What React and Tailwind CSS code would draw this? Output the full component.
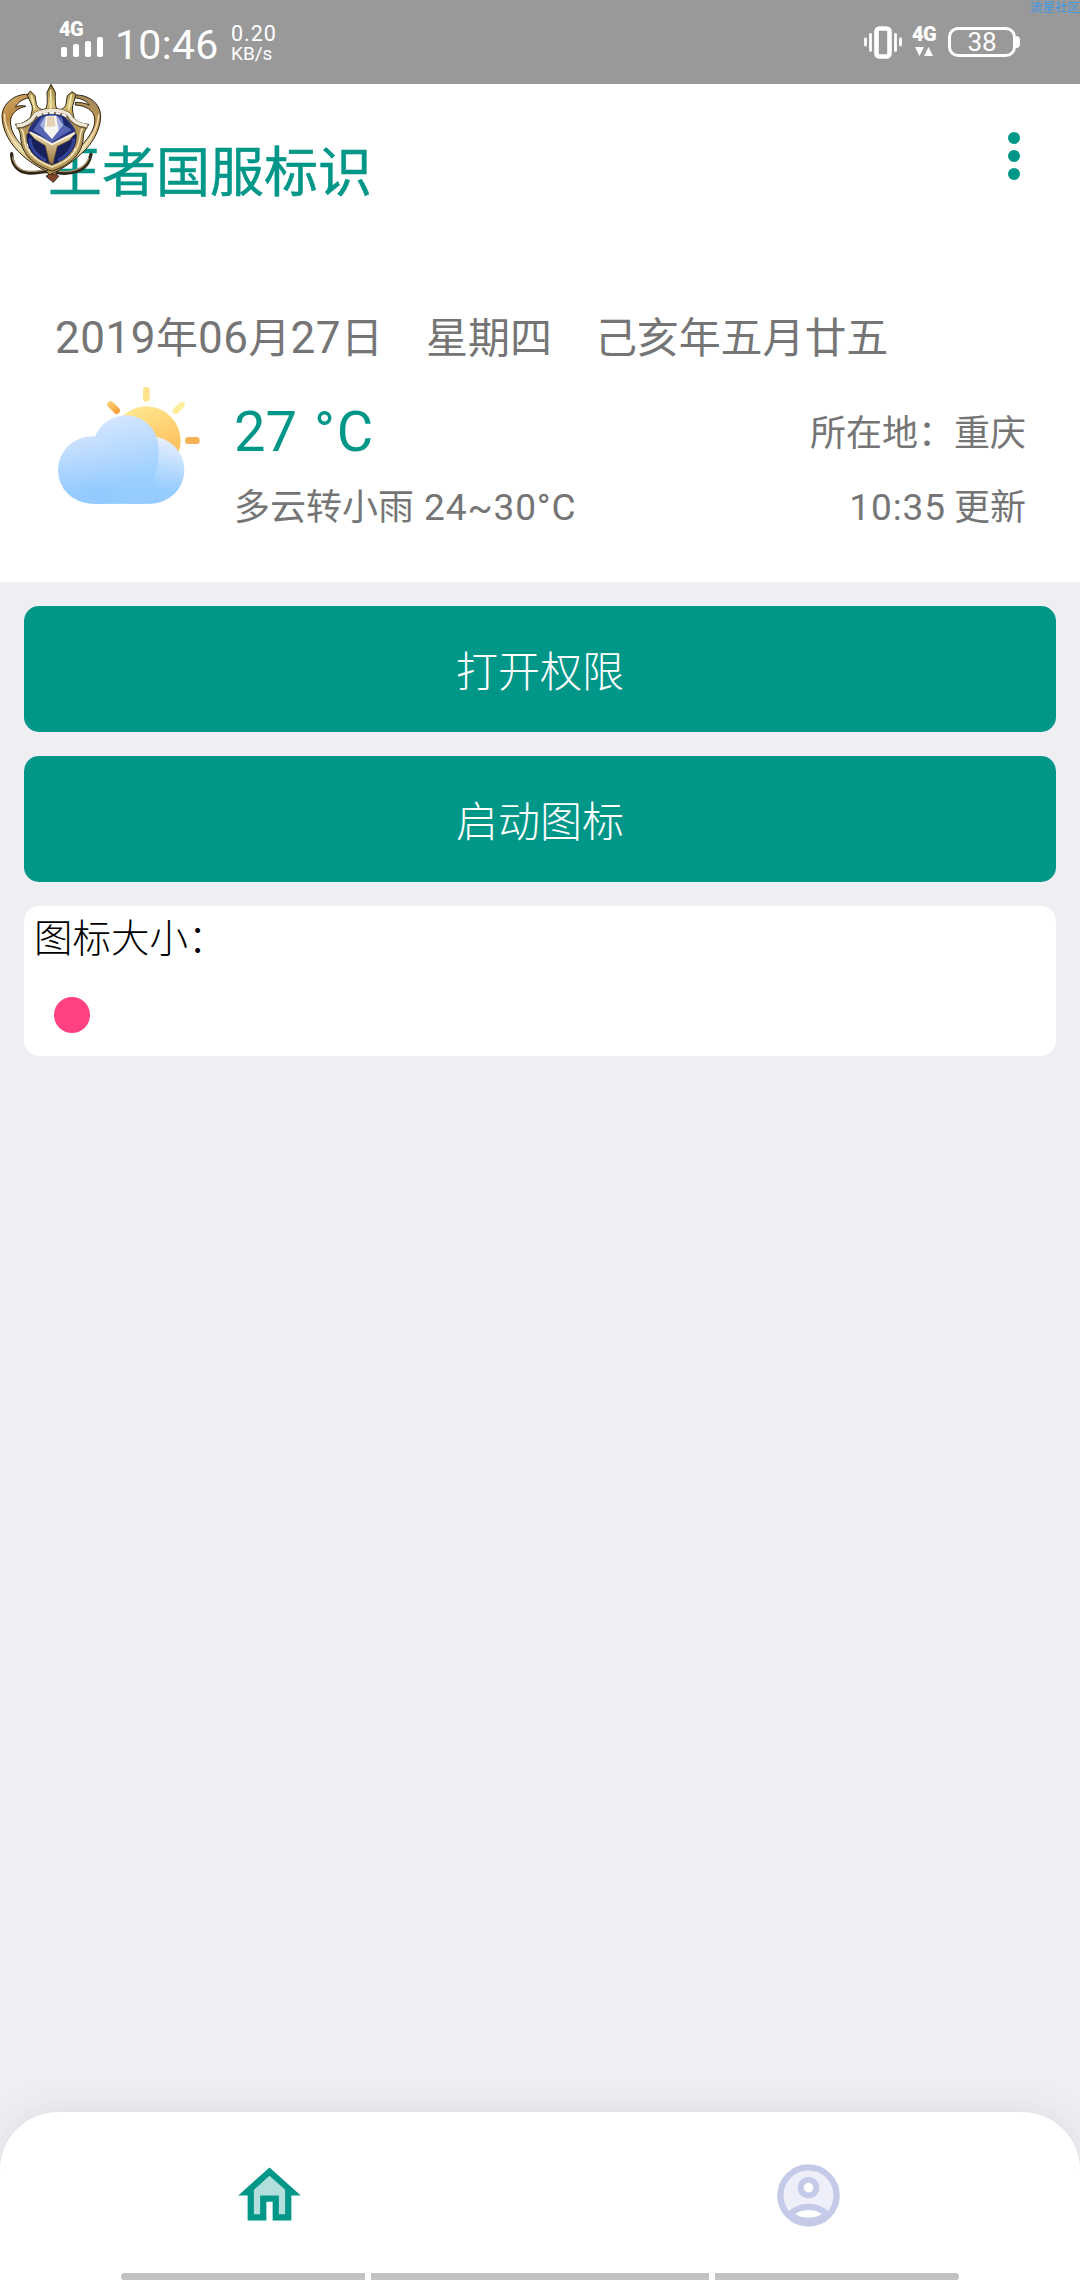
import React from 'react';

const days = { date: ['2019', '年', '06', '月', '27', '日'], week: '星期四', lunar: '己亥年五月廿五' };

const barHeights = ['h-[10px]', 'h-[13px]', 'h-[16px]', 'h-[20px]'];

function StatusBar() {
  return (
    <div className="relative h-[84px] shrink-0 bg-[#999999] text-white font-[Roboto,sans-serif]">
      <div className="flex h-full items-start justify-between pl-[60px] pr-[60px]">
        <div className="flex items-start">
          <div className="w-[46px] pt-[22px]">
            <div className="-ml-px h-[15px] text-[20px] leading-[15px] font-black tracking-[-0.5px]">4G</div>
            <div className="flex h-[20px] items-end gap-[6px] pl-px">
              {barHeights.map((h, i) => (
                <span key={i} className={`w-[6px] rounded-[2px] bg-white ${h}`}></span>
              ))}
            </div>
          </div>
          <div className="w-[112px] pl-[9px] pt-[25px] text-[41px] leading-[41px] tracking-[0.3px] whitespace-nowrap">10:46</div>
          <div className="pl-[13px] pt-[23px]">
            <div className="text-[21.5px] leading-[22px] tracking-[1px]">0.20</div>
            <div className="text-[19px] leading-[18px]">KB/s</div>
          </div>
        </div>

        <div className="flex items-start">
          <svg className="mt-[26px] h-[33px] w-[38px]" viewBox="0 0 38 33" fill="none">
            <rect x="12.5" y="2.5" width="13" height="28" rx="3" stroke="#fff" strokeWidth="4.6" />
            <path d="M1.5 13v6M6.5 8.500v16M31.5 8.500v16M36.500 13v6" stroke="#fff" strokeWidth="2.8" strokeLinecap="round" />
          </svg>
          <div className="ml-[10px] w-[26px] pt-[27px]">
            <div className="h-[16px] text-[20px] leading-[15px] font-black tracking-[-0.5px]">4G</div>
            <svg className="ml-[3px] mt-[4px] h-[9px] w-[18px]" viewBox="0 0 18 9">
              <path d="M0 0h9L4.500 9zM9 9h9L13.500 0z" fill="#fff" />
            </svg>
          </div>
          <div className="ml-[10px] mt-[27px] flex items-center">
            <div className="flex h-[30px] w-[68px] items-center justify-center rounded-[10px] border-[3px] border-white text-[26px] leading-[26px]">38</div>
            <div className="h-[12px] w-[4px] rounded-r-[4px] bg-white"></div>
          </div>
        </div>
      </div>
      <div className="absolute right-0 top-0 whitespace-nowrap text-[12.5px] leading-[13px] text-[#3d98e6] font-['Noto_Sans_CJK_SC',sans-serif]">流星社区</div>
    </div>
  );
}

// Floating crest that sits over the title
function Crest() {
  return (
    <svg className="absolute left-0 top-0 h-[100px] w-[104px]" viewBox="0 27 312 300" fill="none">
      <defs>
        <linearGradient id="hornL" x1="0" y1="60" x2="150" y2="300" gradientUnits="userSpaceOnUse">
          <stop offset="0" stopColor="#d9b878" />
          <stop offset="0.25" stopColor="#b9853f" />
          <stop offset="0.55" stopColor="#e6d3a0" />
          <stop offset="1" stopColor="#c3a15e" />
        </linearGradient>
        <linearGradient id="hornR" x1="310" y1="60" x2="160" y2="300" gradientUnits="userSpaceOnUse">
          <stop offset="0" stopColor="#8d8060" />
          <stop offset="0.3" stopColor="#c79a50" />
          <stop offset="0.6" stopColor="#ead9a8" />
          <stop offset="1" stopColor="#b08a48" />
        </linearGradient>
        <linearGradient id="crown" x1="0" y1="30" x2="0" y2="140" gradientUnits="userSpaceOnUse">
          <stop offset="0" stopColor="#8f7332" />
          <stop offset="0.5" stopColor="#d9c478" />
          <stop offset="1" stopColor="#b09042" />
        </linearGradient>
        <linearGradient id="stem" x1="0" y1="180" x2="0" y2="270" gradientUnits="userSpaceOnUse">
          <stop offset="0" stopColor="#e9d6a8" />
          <stop offset="1" stopColor="#94703a" />
        </linearGradient>
      </defs>

      {/* lower tendrils */}
      <path d="M35 236c0 34 20 56 52 58 28 2 46-8 70-4 26 6 54 8 80-4 20-8 32-24 36-48" stroke="#2e2618" strokeWidth="10" strokeLinecap="round" />
      <path d="M38 248c6 26 24 40 50 41 28 2 46-8 70-4 26 6 54 8 78-4 14-6 24-16 30-30" stroke="#a89066" strokeWidth="4" strokeLinecap="round" />
      <path d="M138 304l20-14 18 14-16 18z" fill="#86452a" stroke="#2e2618" strokeWidth="3" />

      {/* side horns */}
      <path d="M84 58C46 56 8 84 6 122c0 46 26 88 62 120 28 24 58 42 96 58l10-12C136 270 104 250 78 224 48 196 28 164 32 132c4-18 22-34 46-38-10-4-22-2-32 2 8-14 22-24 42-28z" fill="url(#hornL)" stroke="#2e2618" strokeWidth="3" />
      <path d="M222 60c44-2 78 24 80 62 0 44-26 86-60 116-28 26-58 46-94 62l-10-12c36-16 68-38 94-64 32-32 56-62 52-96-4-22-26-36-58-38v-8c14 0 28 2 42 8-8-12-24-20-46-22z" fill="url(#hornR)" stroke="#2e2618" strokeWidth="3" />
      <path d="M14 118c-2 44 28 88 64 120M296 120c-2 40-28 82-60 112" stroke="#f3e6c0" strokeWidth="4" strokeLinecap="round" />

      {/* shield body */}
      <path d="M46 148c22 0 44-14 58-38 30-12 72-12 100 0 12 22 32 38 62 38-6 14-16 20-16 38-2 50-38 84-94 102-58-18-92-52-94-100 0-18-8-28-16-40z" fill="#b59858" stroke="#2e2618" strokeWidth="3" />
      <path d="M62 156c6 10 10 18 10 32 2 38 28 68 84 88 54-18 80-48 84-90 0-12 4-20 8-28" stroke="#efe0b4" strokeWidth="5" />
      <path d="M80 178c-4 44 24 76 76 92 48-16 76-48 74-92l-74-60z" fill="#18205a" />
      <path d="M90 190c0 30 16 50 48 66M222 190c-2 30-18 50-48 66" stroke="#33439a" strokeWidth="9" />
      <path d="M82 206c4 24 16 36 32 48M226 220c-6 16-18 28-32 36" stroke="#fff" strokeWidth="3" strokeDasharray="9 6" />

      {/* gem */}
      <path d="M84 168c8-22 22-36 36-46 24-8 48-8 70 0 16 12 28 26 38 46l-36 18-36 26-38-26z" fill="#27337c" />
      <path d="M100 166l24-38 30-12 34 12 26 38-26 14-34 24-32-24z" fill="#5565b4" />
      <path d="M120 150l16-26 34-2 20 28-34 42z" fill="#aab3dc" />
      <path d="M132 166l6-42 30-2 8 44-20 26z" fill="#f8f5f5" />
      <path d="M142 126l20-2 4 30-26 2z" fill="#e5d2b2" />
      <path d="M186 124c12 8 22 22 28 38l-22-12z" fill="#1b2565" />
      <path d="M86 172l34 14 36 22 38-22 34-14-20 24-36 18-14 54-10-6-12-50-32-20z" fill="url(#stem)" stroke="#6f5530" strokeWidth="2" />
      <path d="M90 172l32 16 34 20 40-20 28-14" stroke="#f9f2de" strokeWidth="6" />

      {/* crown */}
      <path d="M92 132c0-16 8-26 4-40L82 60l9-12 14 14 4 26c6 14 18 18 28 14 8-16 4-34 4-50l12-24 13 24c0 16-2 36 4 50 14 4 24-2 28-14l4-26 14-12 12 8-10 34c-4 14 4 26 4 40-34-22-90-24-130 0z" fill="url(#crown)" stroke="#2e2618" strokeWidth="3" />
      <path d="M50 154c28 0 44-12 56-34 32-16 74-16 100 0 12 22 32 32 56 34" stroke="#6d5c36" strokeWidth="16" />
      <path d="M50 152c28 0 44-12 56-34 32-16 74-16 100 0 12 22 32 32 56 34" stroke="#efe8da" strokeWidth="10" />
      <path d="M112 124c28-14 60-14 88 0" stroke="#fff" strokeWidth="5" strokeDasharray="14 5" />
      <path d="M152 46v56M94 62l10 40M214 60l-8 42" stroke="#f4e9b0" strokeWidth="5" strokeLinecap="round" />
    </svg>
  );
}

function WeatherIcon() {
  return (
    <svg className="h-[140px] w-[170px] shrink-0" viewBox="0 0 510 420" fill="none">
      <defs>
        <linearGradient id="sun" x1="0.3" y1="0" x2="0.7" y2="1">
          <stop offset="0" stopColor="#ffe78f" />
          <stop offset="1" stopColor="#fdb44e" />
        </linearGradient>
        <linearGradient id="ray" x1="0" y1="0" x2="1" y2="1">
          <stop offset="0" stopColor="#fbc765" />
          <stop offset="1" stopColor="#f8a440" />
        </linearGradient>
        <linearGradient id="cloudMid" x1="200" y1="120" x2="250" y2="386" gradientUnits="userSpaceOnUse">
          <stop offset="0" stopColor="#d6e6ff" />
          <stop offset="0.75" stopColor="#9bcfff" />
          <stop offset="1" stopColor="#93caff" />
        </linearGradient>
        <linearGradient id="cloudLeft" x1="120" y1="184" x2="150" y2="386" gradientUnits="userSpaceOnUse">
          <stop offset="0" stopColor="#cde2fe" />
          <stop offset="0.8" stopColor="#95cbff" />
          <stop offset="1" stopColor="#93caff" />
        </linearGradient>
        <linearGradient id="cloudRight" x1="350" y1="190" x2="320" y2="386" gradientUnits="userSpaceOnUse">
          <stop offset="0" stopColor="#e6effe" />
          <stop offset="0.75" stopColor="#98cdff" />
          <stop offset="1" stopColor="#93caff" />
        </linearGradient>
        <linearGradient id="fadeLeft" x1="120" y1="0" x2="245" y2="0" gradientUnits="userSpaceOnUse">
          <stop offset="0.4" stopColor="#fff" />
          <stop offset="1" stopColor="#fff" stopOpacity="0.25" />
        </linearGradient>
        <mask id="leftMask">
          <rect width="510" height="420" fill="url(#fadeLeft)" />
        </mask>
      </defs>
      <circle cx="304" cy="197" r="103" fill="url(#sun)" />
      <rect x="294" y="36" width="20" height="44" rx="10" fill="#fde48c" />
      <rect x="420" y="186" width="44" height="21" rx="10" fill="#f9b155" />
      <path d="M197 89l18 18" stroke="url(#ray)" strokeWidth="20" strokeLinecap="round" />
      <path d="M392 108l18-18" stroke="#feee9c" strokeWidth="19" strokeLinecap="round" />
      <circle cx="317" cy="285" r="101" fill="url(#cloudRight)" />
      <path d="M147 190C165 148 200 121 243 121c55 0 98 45 98 103 0 24-2 46-8 68-8 38-20 68-36 94H140z" fill="url(#cloudMid)" />
      <path d="M250 340h112a101 101 0 0 1-45 46h-67z" fill="#95cbff" />
      <path d="M140 184a101 101 0 0 0 0 202h110v-90c-2-66-50-112-110-112z" fill="url(#cloudLeft)" mask="url(#leftMask)" />
    </svg>
  );
}

function Header() {
  return (
    <div className="relative flex h-[498px] shrink-0 flex-col bg-white text-[#757575]">
      <div className="flex h-[192px] items-start justify-between pl-[48px] pr-[60px]">
        <h1 className="pt-[45px] text-[54px] leading-[80px] font-normal text-[#009688] [-webkit-text-stroke:0.5px_#009688]">王者国服标识</h1>
        <div className="flex flex-col gap-[6px] pt-[48px]">
          <span className="size-[12px] rounded-full bg-[#009688]"></span>
          <span className="size-[12px] rounded-full bg-[#009688]"></span>
          <span className="size-[12px] rounded-full bg-[#009688]"></span>
        </div>
      </div>

      <div className="flex h-[99px] items-start pt-[29px] pl-[55px] text-[42px] leading-[60px] whitespace-nowrap">
        <div className="flex items-baseline">
          {days.date.map((part, i) => (
            <span key={i} className={i % 2 === 0 ? 'text-[44px] tracking-[0.5px] font-[Roboto,sans-serif]' : ''}>{part}</span>
          ))}
        </div>
        <span className="pl-[43px]">{days.week}</span>
        <span className="pl-[43px] tracking-[-0.1px]">{days.lunar}</span>
      </div>

      <div className="flex pl-[45px] pr-[54px]">
        <WeatherIcon />
        <div className="flex grow flex-col pl-[19px]">
          <div className="flex h-[104px] items-center justify-between pt-[6px]">
            <span className="pt-[3px] text-[56px] leading-[60px] text-[#009688] font-[Roboto,sans-serif]">27<span className="pl-[17px] tracking-[2px]">°C</span></span>
            <span className="text-[36px] leading-[50px]">所在地：重庆</span>
          </div>
          <div className="flex items-baseline justify-between text-[36px] leading-[50px]">
            <span>多云转小雨<span className="pl-[10px] text-[37px] tracking-[0.9px] font-[Roboto,sans-serif]">24~30°C</span></span>
            <span><span className="pr-[8px] text-[37px] tracking-[0.9px] font-[Roboto,sans-serif]">10:35</span>更新</span>
          </div>
        </div>
      </div>
      <Crest />
    </div>
  );
}

function TabBar() {
  return (
    <div className="flex h-[168px] shrink-0 flex-col rounded-t-[58px] bg-white shadow-[0_0_36px_rgba(60,60,80,0.10)]">
      <div className="grid h-[161px] grid-cols-2 justify-items-center pt-[46px] pr-[2px]">
        <svg className="size-[75px]" viewBox="0 0 24 24">
          <path d="M5 12v8h6v-6h2v6h6v-8h3L12 3 2 12z" fill="#009688" />
          <path d="M7 10.190V18h2v-6h6v6h2v-7.810l-5-4.500z" fill="#b2dfdb" />
        </svg>
        <svg className="size-[75px]" viewBox="0 0 24 24">
          <circle cx="12" cy="12" r="9" fill="#efeffa" stroke="#c5cae9" strokeWidth="2" />
          <circle cx="12" cy="9.500" r="2.500" fill="#fff" stroke="#c5cae9" strokeWidth="1.900" />
          <path d="M6.200 18C9 14.800 15 14.800 17.800 18 15 20.800 9 20.800 6.200 18z" fill="#fff" stroke="#c5cae9" strokeWidth="2" />
        </svg>
      </div>
      <div className="flex h-[7px] gap-[6px] pl-[121px]">
        <span className="w-[244px] rounded-l-[4px] bg-[#c2c2c2]"></span>
        <span className="w-[338px] bg-[#c2c2c2]"></span>
        <span className="w-[244px] rounded-r-[4px] bg-[#c2c2c2]"></span>
      </div>
    </div>
  );
}

function App() {
  return (
    <div className="flex h-[2280px] w-[1080px] flex-col overflow-hidden bg-[#eeeef3] font-['Noto_Sans_CJK_SC',sans-serif]">
      <StatusBar />
      <Header />
      <div className="flex grow flex-col gap-[24px] p-[24px]">
        <button className="h-[126px] rounded-[15px] bg-[#009688] pb-[2px] text-[42px] font-light text-white">打开权限</button>
        <button className="h-[126px] rounded-[15px] bg-[#009688] pb-[2px] text-[42px] font-light text-white">启动图标</button>
        <div className="h-[150px] rounded-[15px] bg-white pl-[10px]">
          <div className="text-[38.5px] leading-[58px] font-light text-black">图标大小：</div>
          <div className="ml-[20px] mt-[33px] size-[36px] rounded-full bg-[#ff4081]"></div>
        </div>
      </div>
      <TabBar />
    </div>
  );
}

export default App;
